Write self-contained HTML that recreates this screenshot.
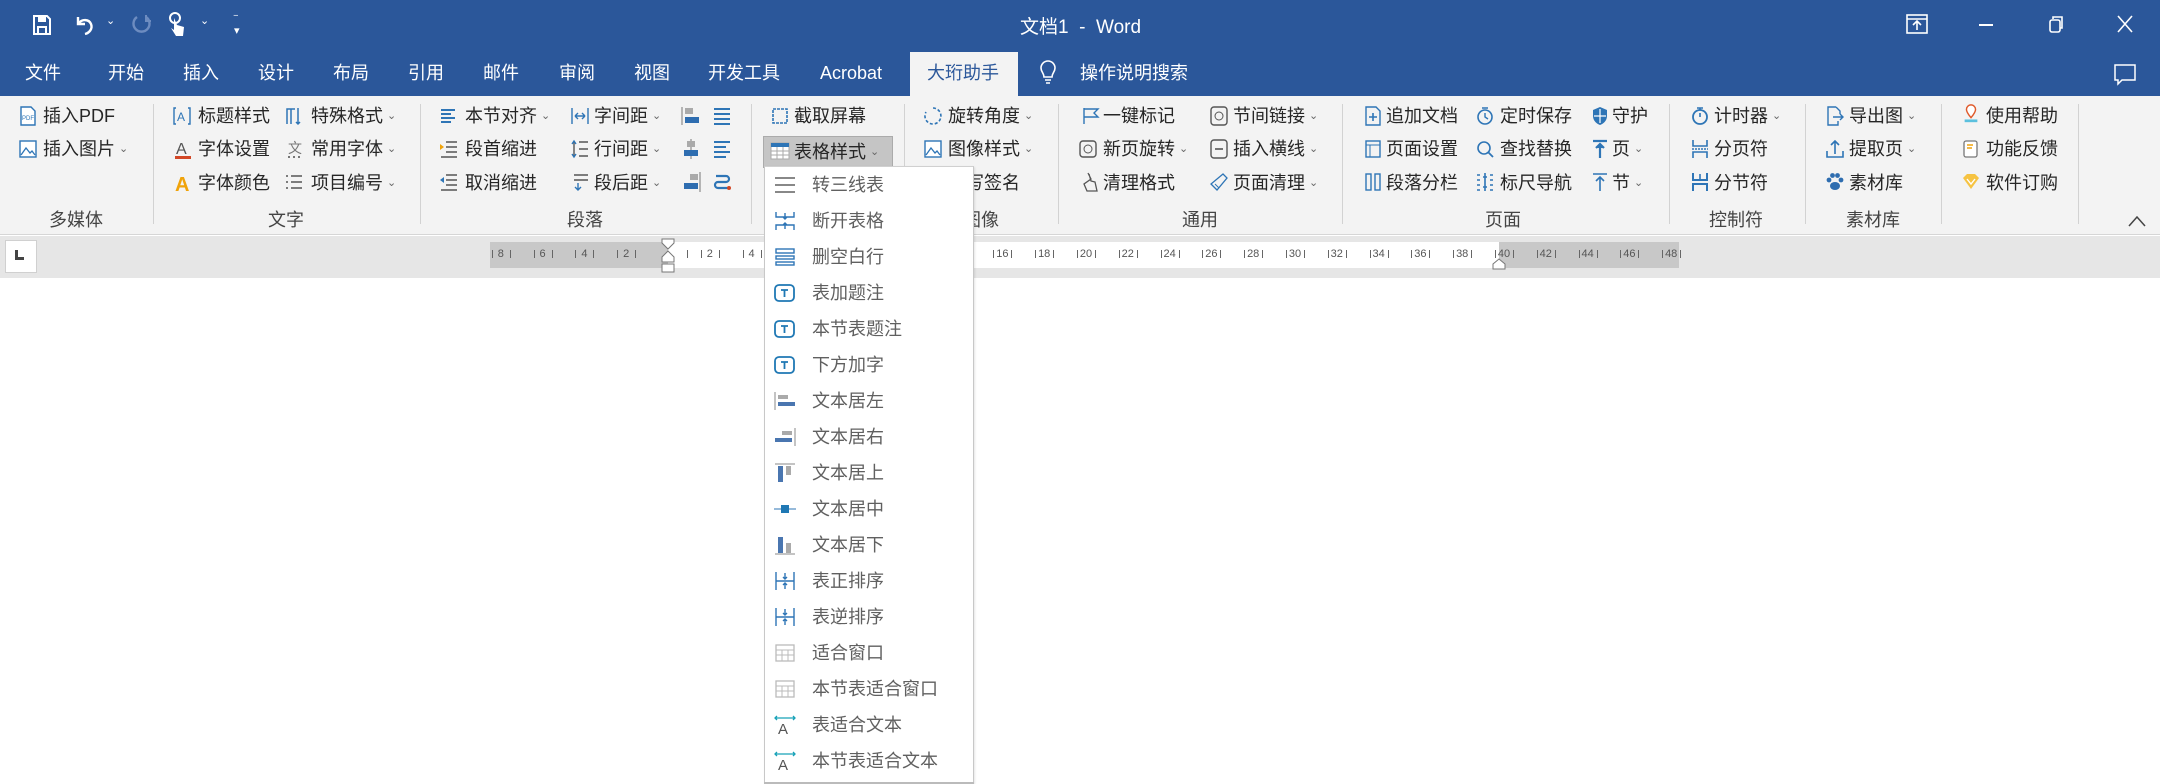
<!DOCTYPE html>
<html><head><meta charset="utf-8">
<style>
*{margin:0;padding:0;box-sizing:border-box}
body{width:2160px;height:784px;overflow:hidden;background:#fff;font-family:"Liberation Sans","Noto Sans CJK SC",sans-serif;position:relative;color:#262626}
.a{position:absolute;white-space:nowrap}
#title{left:0;top:0;width:2160px;height:50px;background:#2b579a}
#tabs{left:0;top:50px;width:2160px;height:46px;background:#2b579a}
.tab{position:absolute;top:58px;color:#fff;font-size:18px;line-height:30px}
#rib{left:0;top:96px;width:2160px;height:139px;background:#f3f3f3;border-bottom:1px solid #d6d6d6}
.t{position:absolute;font-size:18px;line-height:24px;color:#262626}
.ic{position:absolute;width:20px;height:20px}
.sep{position:absolute;top:104px;width:1px;height:120px;background:#d2d2d2}
.gl{position:absolute;top:208px;font-size:18px;line-height:24px;color:#444;transform:translateX(-50%)}
.dv{font-size:11px;color:#666;margin-left:4px;vertical-align:3px}
#rul{left:0;top:236px;width:2160px;height:42px;background:#e6e6e6}
.rn{position:absolute;top:245px;font-size:11px;color:#555;transform:translateX(-50%);line-height:18px}
#dd{left:764px;top:166px;width:210px;height:618px;background:#fff;border:1px solid #c8c8c8;border-top:1px solid #d0d0d0;box-shadow:1px 1px 2px rgba(0,0,0,.1)}
.it{position:absolute;left:0;width:208px;height:36px;font-size:18px;color:#606060;line-height:36px}
.it span{position:absolute;left:47px}
.it svg{position:absolute;left:8px;top:8px}
</style></head><body>
<div id="title" class="a"></div>
<!-- QAT -->
<svg class="a" style="left:32px;top:14px" width="20" height="22" viewBox="0 0 20 22"><path d="M2 2h13l3 3v15H2z" fill="none" stroke="#fff" stroke-width="2"/><rect x="6" y="2" width="8" height="6" fill="#fff"/><rect x="6" y="13" width="8" height="7" fill="none" stroke="#fff" stroke-width="2"/></svg>
<svg class="a" style="left:74px;top:14px" width="22" height="22" viewBox="0 0 22 22"><path d="M4 3v7h7" fill="none" stroke="#fff" stroke-width="2.4"/><path d="M5 9c3-4 10-4 12 1s-2 9-6 10" fill="none" stroke="#fff" stroke-width="2.4"/></svg>
<div class="a" style="left:106px;top:14px;color:#fff;font-size:11px">⌄</div>
<svg class="a" style="left:132px;top:13px" width="20" height="24" viewBox="0 0 20 24"><path d="M14 4a8 8 0 1 1-9 0" fill="none" stroke="#6d8cc0" stroke-width="2.4"/><path d="M14 2v6h5" fill="none" stroke="#6d8cc0" stroke-width="2"/></svg>
<svg class="a" style="left:168px;top:12px" width="18" height="26" viewBox="0 0 18 26"><circle cx="7" cy="6" r="5" fill="none" stroke="#fff" stroke-width="2"/><path d="M6 6v12l-3-2 5 8h7l1-9-7-2" fill="#fff"/></svg>
<div class="a" style="left:200px;top:14px;color:#fff;font-size:11px">⌄</div>
<div class="a" style="left:234px;top:16px;color:#fff;font-size:11px;line-height:10px">‾<br>▾</div>
<div class="a" style="left:1020px;top:12px;color:#fff;font-size:19px">文档1 &nbsp;-&nbsp; Word</div>
<svg class="a" style="left:1906px;top:14px" width="22" height="20" viewBox="0 0 22 20"><rect x="1" y="1" width="20" height="18" fill="none" stroke="#fff" stroke-width="1.6"/><path d="M1 5h20M11 16V8M7 11l4-4 4 4" fill="none" stroke="#fff" stroke-width="1.6"/></svg>
<div class="a" style="left:1979px;top:24px;width:14px;height:2px;background:#fff"></div>
<svg class="a" style="left:2048px;top:15px" width="16" height="18" viewBox="0 0 16 18"><rect x="2" y="5" width="10" height="12" rx="2" fill="none" stroke="#fff" stroke-width="1.6"/><path d="M5 4V2h9v11h-2" fill="none" stroke="#fff" stroke-width="1.6"/></svg>
<svg class="a" style="left:2117px;top:15px" width="16" height="18" viewBox="0 0 16 18"><path d="M1 1l14 16M15 1L1 17" stroke="#fff" stroke-width="1.6"/></svg>

<div id="tabs" class="a"></div>
<div class="a" style="left:910px;top:52px;width:108px;height:46px;background:#f3f3f3"></div>
<div class="tab" style="left:25px">文件</div>
<div class="tab" style="left:108px">开始</div>
<div class="tab" style="left:183px">插入</div>
<div class="tab" style="left:258px">设计</div>
<div class="tab" style="left:333px">布局</div>
<div class="tab" style="left:408px">引用</div>
<div class="tab" style="left:483px">邮件</div>
<div class="tab" style="left:559px">审阅</div>
<div class="tab" style="left:634px">视图</div>
<div class="tab" style="left:708px">开发工具</div>
<div class="tab" style="left:820px">Acrobat</div>
<div class="tab" style="left:927px;color:#2b579a">大珩助手</div>
<svg class="a" style="left:1040px;top:60px" width="16" height="26" viewBox="0 0 16 26"><path d="M4 17c0-4-3-5-3-9a7 7 0 0 1 14 0c0 4-3 5-3 9z M5 20h6M6 23h4" fill="none" stroke="#fff" stroke-width="1.6"/></svg>
<div class="tab" style="left:1080px">操作说明搜索</div>
<svg class="a" style="left:2114px;top:64px" width="22" height="22" viewBox="0 0 22 22"><path d="M1 1h20v15H8l-4 4v-4H1z" fill="none" stroke="#fff" stroke-width="1.5"/></svg>

<div id="rib" class="a"></div>
<div class="sep" style="left:153px"></div><div class="sep" style="left:420px"></div><div class="sep" style="left:751px"></div><div class="sep" style="left:904px"></div><div class="sep" style="left:1058px"></div><div class="sep" style="left:1342px"></div><div class="sep" style="left:1669px"></div><div class="sep" style="left:1805px"></div><div class="sep" style="left:1941px"></div><div class="sep" style="left:2078px"></div>

<!-- icon defs by simple shapes -->
<!-- 多媒体 -->
<svg class="ic" style="left:18px;top:106px" viewBox="0 0 20 20"><path d="M3 1h10l4 4v14H3z" fill="#fff" stroke="#2e75b6" stroke-width="1.4"/><text x="4" y="14" font-size="6" fill="#2e75b6" font-family="Liberation Sans">PDF</text></svg>
<div class="t" style="left:43px;top:104px">插入PDF</div>
<svg class="ic" style="left:18px;top:139px" viewBox="0 0 20 20"><rect x="2" y="2" width="16" height="16" fill="#fff" stroke="#2e75b6" stroke-width="1.4"/><path d="M3 16l5-7 4 5 2-2 3 4" fill="none" stroke="#2e75b6" stroke-width="1.3"/></svg>
<div class="t" style="left:43px;top:137px">插入图片<span class="dv">⌄</span></div>
<div class="gl" style="left:76px">多媒体</div>

<!-- 文字 -->
<svg class="ic" style="left:172px;top:106px" viewBox="0 0 20 20"><path d="M4 2H2v16h2M16 2h2v16h-2" fill="none" stroke="#2e75b6" stroke-width="1.4"/><text x="5" y="15" font-size="12" fill="#2e75b6" font-family="Liberation Sans">A</text></svg>
<div class="t" style="left:198px;top:104px">标题样式</div>
<svg class="ic" style="left:173px;top:139px" viewBox="0 0 20 20"><text x="3" y="15" font-size="16" fill="#555" font-family="Liberation Sans">A</text><rect x="2" y="17" width="16" height="3" fill="#d24726"/></svg>
<div class="t" style="left:198px;top:137px">字体设置</div>
<svg class="ic" style="left:173px;top:172px" viewBox="0 0 20 20"><text x="2" y="19" font-size="20" fill="#f0a30a" font-family="Liberation Sans" font-weight="bold">A</text></svg>
<div class="t" style="left:198px;top:171px">字体颜色</div>
<svg class="ic" style="left:284px;top:106px" viewBox="0 0 20 20"><path d="M3 18V3h8M7 3v15M14 2v16M12 16l2 2 2-2" fill="none" stroke="#2e75b6" stroke-width="1.5"/></svg>
<div class="t" style="left:311px;top:104px">特殊格式<span class="dv">⌄</span></div>
<svg class="ic" style="left:284px;top:139px" viewBox="0 0 20 20"><text x="4" y="14" font-size="14" fill="#777">文</text><path d="M4 18h2M9 18h2M14 18h2" stroke="#777" stroke-width="2"/></svg>
<div class="t" style="left:311px;top:137px">常用字体<span class="dv">⌄</span></div>
<svg class="ic" style="left:284px;top:172px" viewBox="0 0 20 20"><path d="M2 4h2M7 4h11M2 10h2M7 10h11M2 16h2M7 16h11" stroke="#555" stroke-width="1.6"/></svg>
<div class="t" style="left:311px;top:171px">项目编号<span class="dv">⌄</span></div>
<div class="gl" style="left:286px">文字</div>

<!-- 段落 -->
<svg class="ic" style="left:439px;top:106px" viewBox="0 0 20 20"><path d="M2 4h14M2 8h10M2 12h14M2 16h10" stroke="#2e75b6" stroke-width="2"/></svg>
<div class="t" style="left:465px;top:104px">本节对齐<span class="dv">⌄</span></div>
<svg class="ic" style="left:439px;top:139px" viewBox="0 0 20 20"><path d="M7 3h11M7 8h11M7 13h11M2 18h16" stroke="#555" stroke-width="1.6"/><path d="M1 5l4 3-4 3z" fill="#f0a30a"/></svg>
<div class="t" style="left:465px;top:137px">段首缩进</div>
<svg class="ic" style="left:439px;top:172px" viewBox="0 0 20 20"><path d="M7 3h11M7 8h11M7 13h11M2 18h16" stroke="#555" stroke-width="1.6"/><path d="M5 5L1 8l4 3z" fill="#2e75b6"/></svg>
<div class="t" style="left:465px;top:171px">取消缩进</div>
<svg class="ic" style="left:570px;top:106px" viewBox="0 0 20 20"><path d="M2 2v16M18 2v16M5 10h10M5 10l3-3M5 10l3 3M15 10l-3-3M15 10l-3 3" fill="none" stroke="#2e75b6" stroke-width="1.4"/></svg>
<div class="t" style="left:594px;top:104px">字间距<span class="dv">⌄</span></div>
<svg class="ic" style="left:570px;top:139px" viewBox="0 0 20 20"><path d="M9 3h9M9 10h9M9 17h9M4 2v16" stroke="#555" stroke-width="1.4"/><path d="M2 5l2-3 2 3M2 15l2 3 2-3" fill="none" stroke="#2e75b6" stroke-width="1.4"/></svg>
<div class="t" style="left:594px;top:137px">行间距<span class="dv">⌄</span></div>
<svg class="ic" style="left:570px;top:172px" viewBox="0 0 20 20"><path d="M4 3h14M4 8h14" stroke="#555" stroke-width="1.4"/><path d="M8 11v7M5 15l3 3 3-3" fill="none" stroke="#2e75b6" stroke-width="1.4"/></svg>
<div class="t" style="left:594px;top:171px">段后距<span class="dv">⌄</span></div>
<svg class="ic" style="left:681px;top:106px" viewBox="0 0 20 20"><path d="M1 1v18" stroke="#777"/><rect x="4" y="2" width="8" height="6" fill="#aaa"/><rect x="4" y="11" width="14" height="6" fill="#2e6db0"/></svg>
<svg class="ic" style="left:712px;top:106px" viewBox="0 0 20 20"><path d="M2 3h16M2 8h16M2 13h16M2 18h16" stroke="#2e75b6" stroke-width="2"/></svg>
<svg class="ic" style="left:681px;top:139px" viewBox="0 0 20 20"><path d="M10 0v20" stroke="#777"/><rect x="6" y="2" width="8" height="6" fill="#aaa"/><rect x="3" y="11" width="14" height="6" fill="#2e6db0"/></svg>
<svg class="ic" style="left:712px;top:139px" viewBox="0 0 20 20"><path d="M2 3h16M2 8h12M2 13h16M2 18h12" stroke="#2e75b6" stroke-width="2"/></svg>
<svg class="ic" style="left:681px;top:172px" viewBox="0 0 20 20"><path d="M19 0v20" stroke="#777"/><rect x="9" y="2" width="8" height="6" fill="#aaa"/><rect x="3" y="11" width="14" height="6" fill="#2e6db0"/></svg>
<svg class="ic" style="left:712px;top:172px" viewBox="0 0 20 20"><path d="M4 4h10a3 3 0 0 1 0 6H6a3 3 0 0 0 0 6h10" fill="none" stroke="#2e75b6" stroke-width="2.2"/><circle cx="17" cy="16" r="2" fill="#d24726"/></svg>
<div class="gl" style="left:585px">段落</div>

<!-- 表格 group -->
<svg class="ic" style="left:770px;top:106px" viewBox="0 0 20 20"><rect x="3" y="3" width="14" height="14" fill="none" stroke="#2e75b6" stroke-width="1.6" stroke-dasharray="3 1"/></svg>
<div class="t" style="left:794px;top:104px">截取屏幕</div>
<div class="a" style="left:763px;top:136px;width:130px;height:32px;background:#c5c5c5;border:1px solid #ababab"></div>
<svg class="ic" style="left:770px;top:141px" viewBox="0 0 20 20"><rect x="1" y="2" width="18" height="16" fill="#fff" stroke="#aaa"/><rect x="1" y="2" width="18" height="4" fill="#2e75b6"/><path d="M1 10h18M1 14h18M7 6v12M13 6v12" stroke="#aaa"/></svg>
<div class="t" style="left:794px;top:140px">表格样式<span class="dv">⌄</span></div>

<!-- 图像 -->
<svg class="ic" style="left:923px;top:106px" viewBox="0 0 20 20"><path d="M10 2a8 8 0 1 1-7 4" fill="none" stroke="#2e75b6" stroke-width="1.6" stroke-dasharray="3 2"/></svg>
<div class="t" style="left:948px;top:104px">旋转角度<span class="dv">⌄</span></div>
<svg class="ic" style="left:923px;top:139px" viewBox="0 0 20 20"><rect x="2" y="2" width="16" height="16" fill="#fff" stroke="#2e75b6" stroke-width="1.4"/><path d="M3 16l5-7 4 5 2-2 3 4" fill="none" stroke="#2e75b6" stroke-width="1.3"/></svg>
<div class="t" style="left:948px;top:137px">图像样式<span class="dv">⌄</span></div>
<div class="t" style="left:948px;top:171px">手写签名</div>
<div class="gl" style="left:981px">图像</div>

<!-- 通用 -->
<svg class="ic" style="left:1082px;top:106px" viewBox="0 0 20 20"><path d="M2 2v16M2 3h14l-4 4 4 4H2" fill="none" stroke="#2e75b6" stroke-width="1.4"/></svg>
<div class="t" style="left:1103px;top:104px">一键标记</div>
<svg class="ic" style="left:1078px;top:139px" viewBox="0 0 20 20"><rect x="2" y="2" width="16" height="16" rx="3" fill="none" stroke="#555" stroke-width="1.4"/><circle cx="10" cy="10" r="4" fill="none" stroke="#555"/></svg>
<div class="t" style="left:1103px;top:137px">新页旋转<span class="dv">⌄</span></div>
<svg class="ic" style="left:1080px;top:172px" viewBox="0 0 20 20"><path d="M8 1l3 6-7 5 3 7h10l-2-9-4-1-2-7" fill="none" stroke="#555" stroke-width="1.3"/></svg>
<div class="t" style="left:1103px;top:171px">清理格式</div>
<svg class="ic" style="left:1209px;top:106px" viewBox="0 0 20 20"><rect x="2" y="1" width="16" height="18" rx="3" fill="none" stroke="#555" stroke-width="1.4"/><circle cx="10" cy="10" r="4" fill="none" stroke="#555"/></svg>
<div class="t" style="left:1233px;top:104px">节间链接<span class="dv">⌄</span></div>
<svg class="ic" style="left:1209px;top:139px" viewBox="0 0 20 20"><rect x="2" y="1" width="16" height="18" rx="3" fill="none" stroke="#555" stroke-width="1.4"/><path d="M6 10h8" stroke="#555" stroke-width="1.6"/></svg>
<div class="t" style="left:1233px;top:137px">插入横线<span class="dv">⌄</span></div>
<svg class="ic" style="left:1209px;top:172px" viewBox="0 0 20 20"><path d="M14 2l4 4-10 12-6-6z" fill="none" stroke="#2e75b6" stroke-width="1.3"/><path d="M6 12l4 4" stroke="#2e75b6"/></svg>
<div class="t" style="left:1233px;top:171px">页面清理<span class="dv">⌄</span></div>
<div class="gl" style="left:1200px">通用</div>

<!-- 页面 -->
<svg class="ic" style="left:1363px;top:106px" viewBox="0 0 20 20"><path d="M3 1h10l4 4v14H3z" fill="none" stroke="#2e75b6" stroke-width="1.4"/><path d="M10 7v8M6 11h8" stroke="#2e75b6" stroke-width="1.6"/></svg>
<div class="t" style="left:1386px;top:104px">追加文档</div>
<svg class="ic" style="left:1363px;top:139px" viewBox="0 0 20 20"><rect x="3" y="2" width="14" height="16" fill="none" stroke="#2e75b6" stroke-width="1.4"/><path d="M3 6h14M7 6v12" stroke="#2e75b6"/></svg>
<div class="t" style="left:1386px;top:137px">页面设置</div>
<svg class="ic" style="left:1363px;top:172px" viewBox="0 0 20 20"><rect x="3" y="2" width="5" height="16" fill="none" stroke="#2e75b6" stroke-width="1.4"/><rect x="12" y="2" width="5" height="16" fill="none" stroke="#2e75b6" stroke-width="1.4"/></svg>
<div class="t" style="left:1386px;top:171px">段落分栏</div>
<svg class="ic" style="left:1475px;top:106px" viewBox="0 0 20 20"><circle cx="10" cy="11" r="7" fill="none" stroke="#2e75b6" stroke-width="1.6"/><path d="M10 7v4l3 2M7 2h6" fill="none" stroke="#2e75b6" stroke-width="1.4"/></svg>
<div class="t" style="left:1500px;top:104px">定时保存</div>
<svg class="ic" style="left:1475px;top:139px" viewBox="0 0 20 20"><circle cx="9" cy="9" r="6" fill="none" stroke="#2e75b6" stroke-width="1.6"/><path d="M13 13l5 5" stroke="#2e75b6" stroke-width="1.8"/></svg>
<div class="t" style="left:1500px;top:137px">查找替换</div>
<svg class="ic" style="left:1475px;top:172px" viewBox="0 0 20 20"><path d="M2 3h3M2 8h3M2 13h3M2 18h3M15 3h3M15 8h3M15 13h3M15 18h3M10 1v18M8 5h4M8 15h4" stroke="#2e75b6" stroke-width="1.6"/></svg>
<div class="t" style="left:1500px;top:171px">标尺导航</div>
<svg class="ic" style="left:1590px;top:106px" viewBox="0 0 20 20"><path d="M10 1l7 3v6c0 5-4 8-7 9-3-1-7-4-7-9V4z" fill="#2e75b6"/><path d="M10 3v14M4 10h12" stroke="#fff" stroke-width="1.2"/></svg>
<div class="t" style="left:1612px;top:104px">守护</div>
<svg class="ic" style="left:1590px;top:139px" viewBox="0 0 20 20"><path d="M3 2h14M10 5v14M6 9l4-4 4 4" fill="#2e75b6" stroke="#2e75b6" stroke-width="2.2"/></svg>
<div class="t" style="left:1612px;top:137px">页<span class="dv">⌄</span></div>
<svg class="ic" style="left:1590px;top:172px" viewBox="0 0 20 20"><path d="M3 2h14M10 5v14M6 9l4-4 4 4" fill="none" stroke="#2e75b6" stroke-width="1.6"/></svg>
<div class="t" style="left:1612px;top:171px">节<span class="dv">⌄</span></div>
<div class="gl" style="left:1503px">页面</div>

<!-- 控制符 -->
<svg class="ic" style="left:1690px;top:106px" viewBox="0 0 20 20"><circle cx="10" cy="11" r="7" fill="none" stroke="#2e75b6" stroke-width="1.8"/><path d="M10 7v4M7 2h6M10 2v2" fill="none" stroke="#2e75b6" stroke-width="1.6"/></svg>
<div class="t" style="left:1714px;top:104px">计时器<span class="dv">⌄</span></div>
<svg class="ic" style="left:1690px;top:139px" viewBox="0 0 20 20"><path d="M3 1v6h14V1M3 19v-6h14v6" fill="none" stroke="#2e75b6" stroke-width="1.6"/><path d="M2 10h16" stroke="#2e75b6" stroke-width="1.4" stroke-dasharray="2 1"/></svg>
<div class="t" style="left:1714px;top:137px">分页符</div>
<svg class="ic" style="left:1690px;top:172px" viewBox="0 0 20 20"><path d="M3 1v7h14V1M3 19v-7h14v7" fill="none" stroke="#2e75b6" stroke-width="2"/><path d="M10 2v5" stroke="#2e75b6" stroke-width="1.6"/></svg>
<div class="t" style="left:1714px;top:171px">分节符</div>
<div class="gl" style="left:1736px">控制符</div>

<!-- 素材库 -->
<svg class="ic" style="left:1825px;top:106px" viewBox="0 0 20 20"><path d="M11 1H3v18h10v-4M11 1l4 4v3" fill="none" stroke="#2e75b6" stroke-width="1.4"/><path d="M8 11h10M15 8l3 3-3 3" fill="none" stroke="#2e75b6" stroke-width="1.4"/></svg>
<div class="t" style="left:1849px;top:104px">导出图<span class="dv">⌄</span></div>
<svg class="ic" style="left:1825px;top:139px" viewBox="0 0 20 20"><path d="M10 15V2M6 6l4-4 4 4M2 12v6h16v-6" fill="none" stroke="#2e75b6" stroke-width="1.6"/></svg>
<div class="t" style="left:1849px;top:137px">提取页<span class="dv">⌄</span></div>
<svg class="ic" style="left:1825px;top:172px" viewBox="0 0 20 20"><ellipse cx="10" cy="14" rx="5" ry="4" fill="#2e6db0"/><circle cx="4" cy="8" r="2.4" fill="#2e6db0"/><circle cx="16" cy="8" r="2.4" fill="#2e6db0"/><circle cx="7.5" cy="3.5" r="2.4" fill="#2e6db0"/><circle cx="12.5" cy="3.5" r="2.4" fill="#2e6db0"/></svg>
<div class="t" style="left:1849px;top:171px">素材库</div>
<div class="gl" style="left:1873px">素材库</div>

<!-- help -->
<svg class="ic" style="left:1961px;top:104px" viewBox="0 0 20 22"><path d="M10 15C5 9 5 7 5 6a5 5 0 0 1 10 0c0 1 0 3-5 9z" fill="#fff" stroke="#e05a2b" stroke-width="1.6"/><rect x="3" y="17" width="14" height="3" fill="#5bc0de"/></svg>
<div class="t" style="left:1986px;top:104px">使用帮助</div>
<svg class="ic" style="left:1961px;top:139px" viewBox="0 0 20 20"><rect x="3" y="2" width="13" height="16" rx="2" fill="#fff" stroke="#777" stroke-width="1.3"/><path d="M6 6h6M6 9h5" stroke="#f0a30a" stroke-width="1.4"/></svg>
<div class="t" style="left:1986px;top:137px">功能反馈</div>
<svg class="ic" style="left:1961px;top:172px" viewBox="0 0 20 20"><path d="M2 6l4-4h8l4 4-8 11z" fill="#f6c342"/><path d="M6 7l4 5 4-5" fill="none" stroke="#fff" stroke-width="1.4"/></svg>
<div class="t" style="left:1986px;top:171px">软件订购</div>
<svg class="a" style="left:2127px;top:214px" width="20" height="14" viewBox="0 0 20 14"><path d="M2 12l8-9 8 9" fill="none" stroke="#444" stroke-width="1.5"/></svg>

<!-- ruler -->
<div id="rul" class="a"></div>
<div class="a" style="left:5px;top:240px;width:32px;height:33px;background:#fff;border:1px solid #d0d0d0"></div>
<div class="a" style="left:15px;top:250px;width:3px;height:10px;background:#444"></div><div class="a" style="left:15px;top:257px;width:9px;height:3px;background:#444"></div>
<div class="a" style="left:490px;top:242px;width:178px;height:26px;background:#c8c8c8"></div>
<div class="a" style="left:668px;top:242px;width:831px;height:26px;background:#fff"></div>
<div class="a" style="left:1499px;top:242px;width:180px;height:26px;background:#c8c8c8"></div>
<div id="rnums"></div>
<svg class="a" style="left:661px;top:238px" width="14" height="36" viewBox="0 0 14 36"><path d="M1 1h12v4l-6 6-6-6z M7 13l6 6v5H1v-5z M1 26h12v8H1z" fill="#fff" stroke="#777"/></svg>
<svg class="a" style="left:1492px;top:258px" width="14" height="12" viewBox="0 0 14 12"><path d="M7 1l6 5v5H1V6z" fill="#fff" stroke="#777"/></svg>

<!-- dropdown -->
<div id="dd" class="a">
<div class="it" style="top:0"><svg width="24" height="20" viewBox="0 0 24 20"><path d="M2 3h20M2 10h20M2 17h20" stroke="#777" stroke-width="1.8"/></svg><span>转三线表</span></div>
<div class="it" style="top:36px"><svg width="24" height="20" viewBox="0 0 24 20"><path d="M3 1v5h18V1M3 19v-5h18v5M12 2v6M10 6l2 2 2-2M12 18v-6M10 14l2-2 2 2" fill="none" stroke="#2e75b6" stroke-width="1.4"/></svg><span>断开表格</span></div>
<div class="it" style="top:72px"><svg width="24" height="20" viewBox="0 0 24 20"><rect x="3" y="2" width="18" height="4" fill="none" stroke="#2e75b6" stroke-width="1.4"/><rect x="3" y="9" width="18" height="3" fill="none" stroke="#2e75b6" stroke-width="1.4"/><rect x="3" y="15" width="18" height="3" fill="none" stroke="#2e75b6" stroke-width="1.4"/></svg><span>删空白行</span></div>
<div class="it" style="top:108px"><svg width="24" height="20" viewBox="0 0 24 20"><rect x="2" y="2" width="19" height="16" rx="4" fill="none" stroke="#1f78b4" stroke-width="1.8"/><path d="M8 7h7M11.5 7v7" stroke="#1f78b4" stroke-width="1.8"/></svg><span>表加题注</span></div>
<div class="it" style="top:144px"><svg width="24" height="20" viewBox="0 0 24 20"><rect x="2" y="2" width="19" height="16" rx="4" fill="none" stroke="#1f78b4" stroke-width="1.8"/><path d="M8 7h7M11.5 7v7" stroke="#1f78b4" stroke-width="1.8"/></svg><span>本节表题注</span></div>
<div class="it" style="top:180px"><svg width="24" height="20" viewBox="0 0 24 20"><rect x="2" y="2" width="19" height="16" rx="4" fill="none" stroke="#1f78b4" stroke-width="1.8"/><path d="M8 7h7M11.5 7v7" stroke="#1f78b4" stroke-width="1.8"/></svg><span>下方加字</span></div>
<div class="it" style="top:216px"><svg width="24" height="20" viewBox="0 0 24 20"><path d="M2 1v18" stroke="#888"/><rect x="5" y="4" width="10" height="4" fill="#aaa"/><rect x="5" y="11" width="17" height="4" fill="#4a76b0"/></svg><span>文本居左</span></div>
<div class="it" style="top:252px"><svg width="24" height="20" viewBox="0 0 24 20"><path d="M22 1v18" stroke="#888"/><rect x="9" y="4" width="10" height="4" fill="#aaa"/><rect x="2" y="11" width="17" height="4" fill="#4a76b0"/></svg><span>文本居右</span></div>
<div class="it" style="top:288px"><svg width="24" height="20" viewBox="0 0 24 20"><path d="M2 1h20" stroke="#888"/><rect x="5" y="3" width="5" height="16" fill="#4a76b0"/><rect x="13" y="3" width="5" height="9" fill="#aaa"/></svg><span>文本居上</span></div>
<div class="it" style="top:324px"><svg width="24" height="20" viewBox="0 0 24 20"><path d="M1 10h22" stroke="#2e75b6"/><rect x="8" y="6" width="8" height="8" fill="#1f78b4"/></svg><span>文本居中</span></div>
<div class="it" style="top:360px"><svg width="24" height="20" viewBox="0 0 24 20"><path d="M2 19h20" stroke="#888"/><rect x="5" y="2" width="5" height="16" fill="#4a76b0"/><rect x="13" y="8" width="5" height="10" fill="#aaa"/></svg><span>文本居下</span></div>
<div class="it" style="top:396px"><svg width="24" height="20" viewBox="0 0 24 20"><path d="M3 1v18M21 1v18M3 10h18M12 2v6M10 6l2 2 2-2M12 18v-6M10 14l2-2 2 2" fill="none" stroke="#2e75b6" stroke-width="1.4"/></svg><span>表正排序</span></div>
<div class="it" style="top:432px"><svg width="24" height="20" viewBox="0 0 24 20"><path d="M3 1v18M21 1v18M3 10h18M12 2v6M10 6l2 2 2-2M12 18v-6M10 14l2-2 2 2" fill="none" stroke="#2e75b6" stroke-width="1.4"/></svg><span>表逆排序</span></div>
<div class="it" style="top:468px"><svg width="24" height="20" viewBox="0 0 24 20"><rect x="3" y="2" width="18" height="16" fill="none" stroke="#bbb" stroke-width="1.3"/><path d="M3 7h18M3 12h18M9 7v11M15 7v11" stroke="#bbb"/></svg><span>适合窗口</span></div>
<div class="it" style="top:504px"><svg width="24" height="20" viewBox="0 0 24 20"><rect x="3" y="2" width="18" height="16" fill="none" stroke="#bbb" stroke-width="1.3"/><path d="M3 7h18M3 12h18M9 7v11M15 7v11" stroke="#bbb"/></svg><span>本节表适合窗口</span></div>
<div class="it" style="top:540px"><svg width="24" height="20" viewBox="0 0 24 20"><path d="M2 3h20M4 1l-2 2 2 2M20 1l2 2-2 2" fill="none" stroke="#17a2b8" stroke-width="1.3"/><text x="5" y="19" font-size="15" fill="#555" font-family="Liberation Sans">A</text></svg><span>表适合文本</span></div>
<div class="it" style="top:576px"><svg width="24" height="20" viewBox="0 0 24 20"><path d="M2 3h20M4 1l-2 2 2 2M20 1l2 2-2 2" fill="none" stroke="#17a2b8" stroke-width="1.3"/><text x="5" y="19" font-size="15" fill="#555" font-family="Liberation Sans">A</text></svg><span>本节表适合文本</span></div>
</div>
<div class="a" style="left:764px;top:782px;width:210px;height:2px;background:#bbb"></div>

<script>
var h='';
for(var n=-8;n<=48;n+=2){if(n==0)continue;var x=668+20.9*n;
h+='<div class="rn" style="left:'+x+'px">'+Math.abs(n)+'</div>';
h+='<div class="a" style="left:'+(x-9)+'px;top:250px;width:1px;height:8px;background:#666"></div>';
h+='<div class="a" style="left:'+(x+9)+'px;top:250px;width:1px;height:8px;background:#666"></div>';}
h+='<div class="a" style="left:687px;top:250px;width:1px;height:8px;background:#666"></div>';
document.getElementById('rnums').innerHTML=h;
</script>
</body></html>
